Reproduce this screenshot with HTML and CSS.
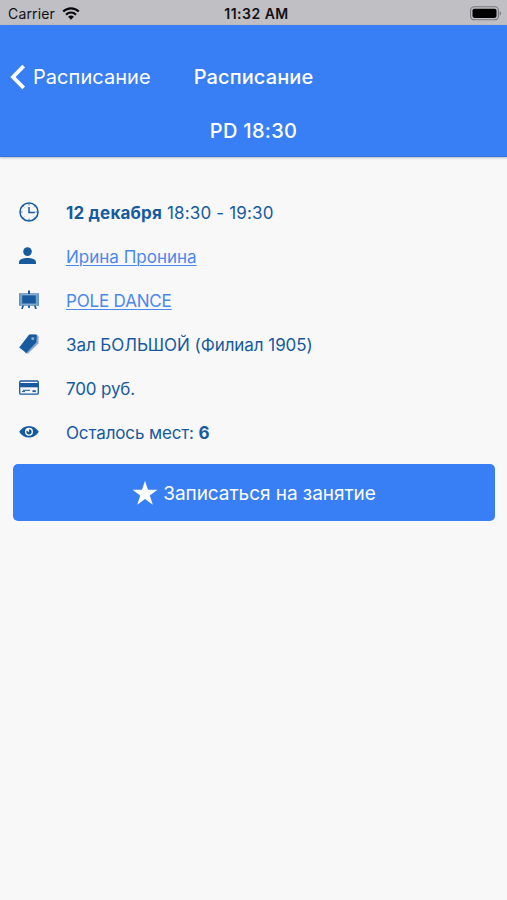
FILE: index.html
```html
<!DOCTYPE html>
<html lang="ru">
<head>
<meta charset="utf-8">
<title>Расписание</title>
<link rel="stylesheet" href="styles.css">
</head>
<body>
<div class="status">
  <div class="status-left"><span class="carrier">Carrier</span>
    <svg class="wifi" viewBox="0 0 18 13" width="18" height="13" fill="none" stroke="#0b0b0d"><path d="M1.2 4.6C5.5.2 12.500.2 16.800 4.600" stroke-width="2.200"/><path d="M4 7.700c2.800-2.900 7.200-2.900 10 0" stroke-width="2.100"/><path d="M6.100 9.700c1.600-1.600 4.200-1.600 5.800 0L9 12.700z" fill="#0b0b0d" stroke="none"/></svg>
  </div>
  <div class="clock">11:32 AM</div>
  <div class="status-right">
    <svg width="32" height="15" viewBox="0 0 32 15"><rect x=".6" y=".8" width="27.800" height="13" rx="3.600" fill="none" stroke="#77777b" stroke-width="1.100"/><rect x="2.500" y="2.700" width="24" height="9.200" rx="1.800" fill="#000"/><path d="M29.700 5.200c1.700.6 1.700 3.700 0 4.300z" fill="#77777b"/></svg>
  </div>
</div>
<header class="header">
  <div class="navbar">
    <a class="back"><svg width="16" height="26" viewBox="0 0 16 26"><path d="M13.700 2.200 3 13l10.700 10.800" fill="none" stroke="#fff" stroke-width="3.800"/></svg><span>Расписание</span></a>
    <h1 class="title">Расписание</h1>
    <span></span>
  </div>
  <div class="subtitle">PD 18:30</div>
</header>
<main>
  <ul class="details">
    <li><svg class="icon" viewBox="0 0 20 20"><circle cx="10" cy="10" r="9" fill="none" stroke="#175a9e" stroke-width="1.500"/><path d="M10 5v5.500h5.800" fill="none" stroke="#175a9e" stroke-width="1.500"/><path d="M10 2v1.500M10 16.500V18M2 10h1.500M16.500 10H18M4.400 4.400l.9.9M14.700 14.700l.9.9M4.400 15.600l.9-.9M14.700 5.300l.9-.9" stroke="#175a9e" stroke-width=".8"/></svg><span class="date"><b>12 декабря</b> 18:30 - 19:30</span></li>
    <li><svg class="icon" viewBox="0 0 20 20"><circle cx="8.500" cy="5.600" r="4.300"/><path d="M0 18v-1.600C0 13.200 4.500 12 8.500 12s8.500 1.200 8.500 4.400V18z"/></svg><a class="link trainer">Ирина Пронина</a></li>
    <li><svg class="icon" viewBox="0 0 20 20"><path d="M9 .5h2V4H9zM3.200 15.500h1.900L3.900 19H2.200zM14.900 15.500h1.900l1 3.500h-1.700zM9.100 15.500h1.800V18H9.100z"/><path d="M0 3.200h20v12.600H0z" opacity=".65"/><path d="M3.300 5.500h13.400v7.800H3.300z"/><path d="M2 4.500h16v10H2z" fill="none" stroke="#8cb2d7" stroke-width=".8"/></svg><a class="link style">POLE DANCE</a></li>
    <li><svg class="icon" viewBox="0 0 20 20"><path d="m11.500 .5 6.500.2 1.700 1.800-.3 6.900L8.800 19.800 6 19z" opacity=".5"/><path fill-rule="evenodd" d="M10.200.5h6.400c.8 0 1.200.5 1.200 1.300l-.4 6.400L7.300 19 .2 13.400zM13.800 3a1.600 1.600 0 1 0 0 3.200 1.600 1.600 0 0 0 0-3.200z"/></svg><span class="hall">Зал БОЛЬШОЙ (Филиал 1905)</span></li>
    <li><svg class="icon" viewBox="0 0 20 20"><rect x=".7" y="3" width="18.600" height="13.200" rx="1.200" fill="none" stroke="#175a9e" stroke-width="1.300"/><path d="M1 5h18v4.300H1z"/><path d="M3 13.600h3M4 12.300h7" stroke="#175a9e" stroke-width="1"/><path d="M13.500 12.200h3.300v1.900h-3.300z"/></svg><span class="price">700 руб.</span></li>
    <li><svg class="icon" viewBox="0 0 20 20"><path fill-rule="evenodd" d="M.2 9.800C2.500 6.300 5.700 4 10 4s7.500 2.300 9.800 5.800C17.500 13.300 14.300 15.600 10 15.600S2.500 13.300.2 9.800zM10 5.800a4 4 0 1 0 0 8 4 4 0 0 0 0-8z"/><path d="M10 7.200a2.600 2.600 0 1 1-2.600 2.600c0-.5.100-.9.300-1.200l1.500 1.200H10z"/></svg><span class="places">Осталось мест: <b>6</b></span></li>
  </ul>
  <button class="book"><svg width="26" height="26" viewBox="0 0 26 26"><path fill="#fff" d="m13 .8 3 9h9.500l-7.700 5.600 3 9.400L13 19l-7.800 5.800 3-9.400L.5 9.800H10z"/></svg><span>Записаться на занятие</span></button>
</main>
</body>
</html>
```
FILE: styles.css
```css
* { box-sizing: border-box; }
body { margin: 0; min-height: 900px; background: #f8f8f8; color: #175a9e; font-family: Inter, "Liberation Sans", sans-serif; font-size: 17px; }
.status { height: 25px; display: grid; grid-template-columns: 1fr auto 1fr; align-items: center; padding: 2px 5px 0 8px; background: #bfbfc4; color: #111114; font-size: 14px; }
.status-left { display: flex; align-items: center; gap: 7px; }
.carrier { letter-spacing: .15px; }
.clock { font-weight: 600; letter-spacing: .5px; padding-left: 3px; }
.status-right { display: flex; justify-content: flex-end; }
.header { height: 132px; padding-top: 25px; background: #387ef5; color: #fff; border-bottom: 1px solid #3473df; box-shadow: 0 1px 2px rgba(0, 0, 0, .25); }
.navbar { height: 53px; display: grid; grid-template-columns: 1fr auto 1fr; align-items: center; padding: 0 10px; }
.back { display: flex; align-items: center; gap: 7px; font-size: 20px; letter-spacing: .05px; }
.title { margin: 0; font-size: 20px; font-weight: 500; letter-spacing: .1px; }
.subtitle { height: 53px; line-height: 56px; text-align: center; font-size: 20px; font-weight: 500; letter-spacing: .3px; }
.details { list-style: none; margin: 0; padding: 34px 0 0 19px; }
.details li { height: 44px; display: flex; align-items: center; gap: 27px; white-space: nowrap; }
.icon { width: 20px; height: 20px; flex: none; fill: #175a9e; margin-top: -2px; }
.details b { font-weight: 700; }
.date { letter-spacing: .17px; }
.style { letter-spacing: -.17px; }
.hall { letter-spacing: -.06px; }
.price { letter-spacing: -.15px; }
.places { letter-spacing: -.13px; }
.link { color: #4b88ec; text-decoration: underline; text-underline-offset: 2px; text-decoration-thickness: 1px; }
.book { display: flex; align-items: center; justify-content: center; gap: 5px; width: 482px; height: 57px; margin: 9px 0 0 13px; padding: 0; border: 0; border-radius: 5px; background: #387ef5; color: #fff; font: 400 19px Inter, "Liberation Sans", sans-serif; letter-spacing: -.05px; }
.book span { padding-top: 2px; }
```
